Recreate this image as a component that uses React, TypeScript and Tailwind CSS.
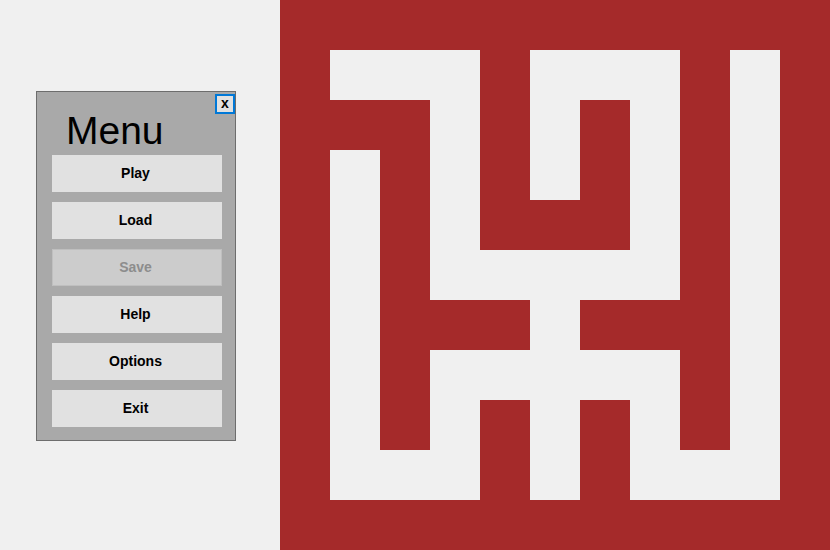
import React from 'react'

// 11x11 maze, 1 = wall, 0 = path
const maze = [
  '11111111111',
  '10001000101',
  '11101010101',
  '10101010101',
  '10101110101',
  '10100000101',
  '10111011101',
  '10100000101',
  '10101010101',
  '10001010001',
  '11111111111',
]

const buttons = [
  { label: 'Play', enabled: true },
  { label: 'Load', enabled: true },
  { label: 'Save', enabled: false },
  { label: 'Help', enabled: true },
  { label: 'Options', enabled: true },
  { label: 'Exit', enabled: true },
]

export default function App() {
  return (
    <div
      className="flex w-[830px] h-[550px] bg-[#f0f0f0] overflow-hidden"
      style={{ fontFamily: '"Liberation Sans", Arial, sans-serif' }}
    >
      <div className="w-[280px] shrink-0 pl-[36px] pt-[91px]">
        <div className="relative w-[200px] h-[350px] bg-[#a9a9a9] border border-[#6d6d6d]">
          <button className="absolute top-[2px] right-[0px] w-[20px] h-[20px] bg-[#e1e1e1] border-2 border-[#0078d7] flex items-center justify-center text-[14px] font-bold leading-none text-black pb-[2px]">
            x
          </button>
          <div className="pl-[29px] pt-[19px] h-[63px] text-[39px] leading-none text-black">Menu</div>
          <div className="flex flex-col gap-[10px] pl-[15px]">
            {buttons.map(b => (
              <div
                key={b.label}
                className={`w-[170px] h-[37px] flex items-center justify-center pr-[3px] text-[14px] font-bold ${
                  b.enabled ? 'bg-[#e1e1e1] text-black' : 'bg-[#cccccc] border border-[#bfbfbf] text-[#8d8d8d]'
                }`}
              >
                {b.label}
              </div>
            ))}
          </div>
        </div>
      </div>
      <div className="grid grid-cols-[repeat(11,50px)] grid-rows-[repeat(11,50px)] w-[550px] h-[550px] shrink-0">
        {maze.flatMap((row, r) =>
          row.split('').map((c, i) => (
            <div key={`${r}-${i}`} className={c === '1' ? 'bg-[#a52a2a]' : 'bg-[#f0f0f0]'} />
          ))
        )}
      </div>
    </div>
  )
}
